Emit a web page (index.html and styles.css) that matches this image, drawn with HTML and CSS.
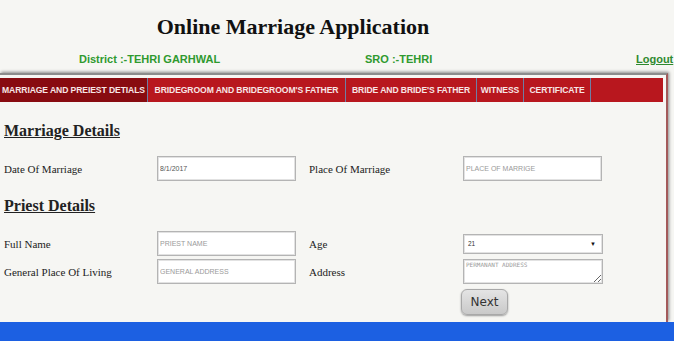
FILE: index.html
```html
<!DOCTYPE html>
<html lang="en">
<head>
  <meta charset="UTF-8">
  <title>Online Marriage Application</title>
  <link rel="stylesheet" href="styles.css">
</head>
<body>
  <div class="header">
    <h1 class="title">Online Marriage Application</h1>
    <div class="office">
      <span class="district">District :-TEHRI GARHWAL</span>
      <span class="sro">SRO :-TEHRI</span>
      <a class="logout" href="#">Logout</a>
    </div>
  </div>

  <div class="frame">
    <ul class="tabs">
      <li class="tab active w1">MARRIAGE AND PREIEST DETIALS</li>
      <li class="tab w2">BRIDEGROOM AND BRIDEGROOM'S FATHER</li>
      <li class="tab w3">BRIDE AND BRIDE'S FATHER</li>
      <li class="tab w4">WITNESS</li>
      <li class="tab w5">CERTIFICATE</li>
    </ul>

    <div class="content">
      <h2 class="section">Marriage Details</h2>
      <div class="grid">
        <label class="lbl">Date Of Marriage</label>
        <input class="field" type="text" value="8/1/2017">
        <label class="lbl lbl-right">Place Of Marriage</label>
        <input class="field" type="text" placeholder="PLACE OF MARRIGE">
      </div>

      <h2 class="section">Priest Details</h2>
      <div class="grid">
        <label class="lbl">Full Name</label>
        <input class="field" type="text" placeholder="PRIEST NAME">
        <label class="lbl lbl-right">Age</label>
        <div class="select">
          <span>21</span>
          <span class="arrow">&#9660;</span>
        </div>

        <label class="lbl">General Place Of Living</label>
        <input class="field" type="text" placeholder="GENERAL ADDRESS">
        <label class="lbl lbl-right">Address</label>
        <textarea class="area" placeholder="PERMANANT ADDRESS"></textarea>

        <div class="btn-cell">
          <button class="next">Next</button>
        </div>
      </div>
    </div>
  </div>

  <div class="taskbar"></div>
</body>
</html>
```

FILE: styles.css
```css
body {
  margin: 0;
  background: #f6f6f3;
  overflow: hidden;
}
.header {
  height: 73px;
}
.title {
  margin: 0;
  padding-top: 14px;
  width: 586px;
  text-align: center;
  font-family: "Liberation Serif", serif;
  font-size: 22px;
  line-height: 26px;
  color: #111;
}
.office {
  display: flex;
  margin-top: 12px;
  font-family: "Liberation Sans", sans-serif;
  font-weight: bold;
  font-size: 11px;
  line-height: 14px;
  color: #2f9a2f;
  white-space: nowrap;
}
.district {
  margin-left: 79px;
  width: 286px;
}
.sro {
  width: 271px;
}
.logout {
  color: #2f8a2f;
  text-decoration: underline;
}
.frame {
  width: 663px;
  height: 244px;
  padding: 3px 3px 0 0;
  border-top: 2px solid #8c8c8c;
  border-right: 2px solid #a35a5a;
  box-shadow: 1px -1px 3px #888;
}
.tabs {
  display: flex;
  margin: 0;
  padding: 0;
  list-style: none;
  height: 24px;
  background: #b8171e;
}
.tab {
  display: flex;
  align-items: center;
  justify-content: center;
  overflow: hidden;
  border-right: 1px solid #6f7ea3;
  font-family: "Liberation Sans", sans-serif;
  font-weight: bold;
  font-size: 8.6px;
  letter-spacing: -0.1px;
  color: #f7e6e6;
  white-space: nowrap;
  box-sizing: border-box;
}
.tab.active {
  background: #880b10;
}
.w1 { width: 148px; }
.w2 { width: 198px; }
.w3 { width: 131px; }
.w4 { width: 47px; }
.w5 { width: 67px; }
.content {
  padding-left: 4px;
}
.section {
  margin: 19px 0 15px;
  font-family: "Liberation Serif", serif;
  font-size: 16px;
  line-height: 20px;
  color: #222;
  text-decoration: underline;
}
.section + .grid + .section {
  margin-top: 15px;
}
.grid {
  display: grid;
  grid-template-columns: 153px 139px 167px 140px;
  row-gap: 3px;
  align-items: center;
}
.lbl {
  font-family: "Liberation Serif", serif;
  font-size: 11px;
  color: #222;
}
.lbl-right {
  padding-left: 13px;
}
.field {
  box-sizing: border-box;
  width: 139px;
  height: 25px;
  margin: 0;
  padding: 0 2px;
  background: #fff;
  border: 1px solid #b4b4b4;
  box-shadow: inset 0 0 0 1px #e2e2e2;
  font-family: "Liberation Sans", sans-serif;
  font-size: 7px;
  color: #555;
}
.field::placeholder {
  color: #9a9a9a;
}
.select {
  box-sizing: border-box;
  display: flex;
  justify-content: space-between;
  align-items: center;
  width: 140px;
  height: 20px;
  padding: 0 6px 0 4px;
  background: #fff;
  border: 1px solid #b4b4b4;
  box-shadow: inset 0 0 0 1px #e2e2e2;
  font-family: "Liberation Sans", sans-serif;
  font-size: 6.5px;
  color: #333;
}
.arrow {
  font-size: 6px;
  color: #111;
}
.area {
  box-sizing: border-box;
  width: 140px;
  height: 25px;
  margin: 0;
  padding: 1px 2px;
  resize: both;
  background: #fff;
  border: 1px solid #b4b4b4;
  box-shadow: inset 0 0 0 1px #e2e2e2;
  font-family: "DejaVu Sans Mono", monospace;
  font-size: 6px;
}
.area::placeholder {
  color: #9a9a9a;
}
.btn-cell {
  grid-column: 4;
  margin-top: 2px;
}
.next {
  width: 47px;
  height: 26px;
  margin-left: -2px;
  padding: 0;
  border: 1px solid #a8a8a8;
  border-radius: 6px;
  background: linear-gradient(#e4e4e4, #c9c9c9);
  box-shadow: 0 1px 2px #999;
  font-family: "DejaVu Sans", sans-serif;
  font-size: 12px;
  color: #333;
}
.taskbar {
  height: 19px;
  background: #1c60e2;
}
```
